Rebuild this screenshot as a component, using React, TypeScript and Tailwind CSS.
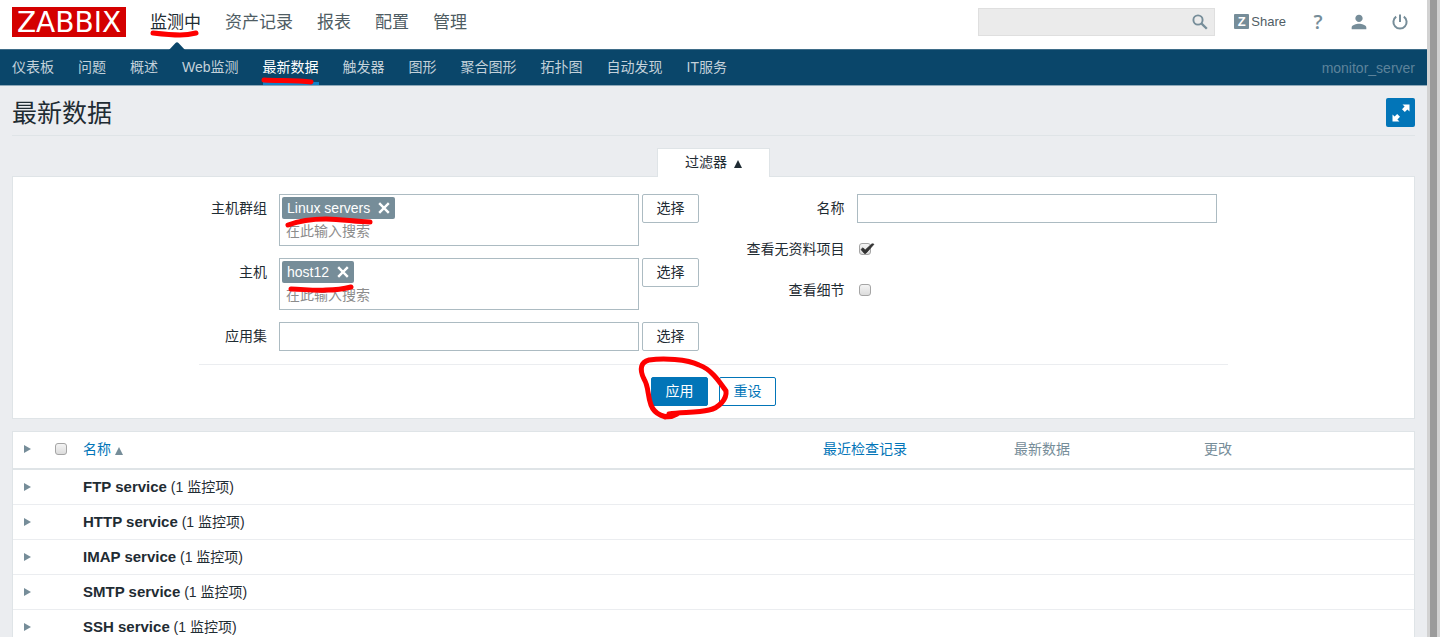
import { useState } from "react";
import type { ReactNode } from "react";
import { MdPerson } from "react-icons/md";

const mainMenu = ["监测中", "资产记录", "报表", "配置", "管理"];

const subMenu = [
  "仪表板",
  "问题",
  "概述",
  "Web监测",
  "最新数据",
  "触发器",
  "图形",
  "聚合图形",
  "拓扑图",
  "自动发现",
  "IT服务",
];

const applications = [
  { name: "FTP service", items: 1 },
  { name: "HTTP service", items: 1 },
  { name: "IMAP service", items: 1 },
  { name: "SMTP service", items: 1 },
  { name: "SSH service", items: 1 },
];

// hand-drawn red marker, laid over the element it points at
function Marker({ d, className }: { d: string; className: string }) {
  return (
    <svg className={`pointer-events-none absolute z-10 overflow-visible ${className}`} aria-hidden="true">
      <path d={d} fill="none" stroke="#fe0000" strokeWidth="5" strokeLinecap="round" strokeLinejoin="round" />
    </svg>
  );
}

function Checkbox({ id, label, defaultChecked }: { id: string; label?: string; defaultChecked?: boolean }) {
  return (
    <span className="relative block size-3">
      <input
        id={id}
        type="checkbox"
        aria-label={label}
        defaultChecked={defaultChecked}
        className="peer block size-3 appearance-none rounded-[3px] border border-[#a5a5a5] bg-linear-to-b from-[#f4f4f4] to-[#dcdcdc]"
      />
      <svg
        viewBox="0 0 16 12"
        className="pointer-events-none absolute top-0 left-0 hidden h-3 w-4 peer-checked:block"
        aria-hidden="true"
      >
        <path d="M2 6.5 4 4.8 6.2 7 13 .8 15 1.2 6.8 10.4 5.4 10.4Z" fill="#333" stroke="#333" strokeWidth=".8" />
      </svg>
    </span>
  );
}

function SelectButton() {
  return (
    <button type="button" className="h-[29px] w-[57px] shrink-0 rounded-xs border border-[#acbbc2] bg-white pb-0.5">
      选择
    </button>
  );
}

function MultiSelect({ id, tag, children }: { id: string; tag: string; children?: ReactNode }) {
  const [selected, setSelected] = useState(true);
  return (
    <div className="relative h-[52px] w-[360px] border border-[#acbbc2] bg-white p-0.5">
      {selected && (
        <span className="flex h-[22px] w-fit items-center gap-2 rounded-xs bg-[#768d99] px-[5px] text-white">
          {tag}
          <button type="button" aria-label={`移除 ${tag}`} onClick={() => setSelected(false)}>
            <svg viewBox="0 0 10 10" className="size-3" aria-hidden="true">
              <path d="M1 1 9 9M9 1 1 9" stroke="#fff" strokeWidth="2" />
            </svg>
          </button>
        </span>
      )}
      <input
        id={id}
        type="text"
        placeholder="在此输入搜索"
        className="block h-6 w-full px-1 outline-none placeholder:text-[#8c8c8c]"
      />
      {children}
    </div>
  );
}

function RowArrow({ label }: { label: string }) {
  return (
    <button type="button" aria-label={label} className="block">
      <svg viewBox="0 0 7 8" className="h-2 w-[7px]" aria-hidden="true">
        <path d="M0 0 7 4 0 8Z" fill="#768d99" />
      </svg>
    </button>
  );
}

function Header() {
  return (
    <header>
      <div className="flex h-[49px] items-center bg-white px-3 pb-1.5">
        <a
          href="#home"
          className="flex h-[30px] w-[114px] items-center justify-center bg-[#d40000] pt-0.5 font-['DejaVu_Sans',sans-serif] text-[28px] leading-[30px] text-white"
        >
          ZABBIX
        </a>
        <nav className="ml-6 flex gap-6 pt-0.5 text-[17px] leading-6">
          {mainMenu.map((item, i) => (
            <a key={item} href="#menu" className={i === 0 ? "relative text-[#1f2c33]" : "text-[#4f5d64]"}>
              {item}
              {i === 0 && (
                <>
                  <Marker d="M3 0C12 1 22 2 30 2S42 1 46 0" className="top-[22px] left-0 h-2 w-12" />
                  <svg viewBox="0 0 18 9" className="absolute top-[31px] left-[18px] h-[9px] w-[18px]" aria-hidden="true">
                    <path d="M0 9 7.5 1Q9-.5 10.5 1L18 9Z" fill="#0a466a" />
                  </svg>
                </>
              )}
            </a>
          ))}
        </nav>
        <form className="ml-auto flex h-7 w-[237px] items-center border border-[#dfdfdf] bg-[#ebebeb] pr-1.5">
          <input type="text" aria-label="搜索" className="h-full min-w-0 flex-1 px-2 outline-none" />
          <button type="button" aria-label="搜索">
            <svg viewBox="0 0 16 16" className="size-4" fill="none" stroke="#768d99" aria-hidden="true">
              <circle cx="6" cy="6" r="4.6" strokeWidth="1.9" />
              <path d="M9.6 9.6 14.8 14.8" strokeWidth="2.3" />
            </svg>
          </button>
        </form>
        <a href="#share" className="ml-[19px] flex items-center gap-0.5 text-[13px] text-[#4f5d64]">
          <span className="flex size-[15px] items-center justify-center rounded-[1px] bg-[#768d99] text-[13px] font-bold text-white">
            Z
          </span>
          Share
        </a>
        <a
          href="#help"
          className="ml-[22px] w-5 text-center font-['Open_Sans',sans-serif] text-xl leading-7 font-semibold text-[#768d99]"
        >
          ?
        </a>
        <a href="#profile" aria-label="用户" className="ml-5">
          <MdPerson className="size-[22px] text-[#768d99]" />
        </a>
        <a href="#logout" aria-label="退出" className="mr-[7px] ml-[22px]">
          <svg viewBox="0 0 16 16" className="size-4" fill="none" stroke="#768d99" strokeWidth="2" aria-hidden="true">
            <path d="M8 .5V8M4.2 2.6A6.6 6.6 0 1 0 11.8 2.6" />
          </svg>
        </a>
      </div>
      <div className="flex h-[37px] items-center border-y border-t-[#3f6d89] border-b-[#8fa9b9] bg-[#0a466a] px-3">
        <nav className="flex gap-6">
          {subMenu.map((item) => (
            <a
              key={item}
              href="#submenu"
              className={
                item === "最新数据"
                  ? "relative h-[35px] border-b-3 border-[#1183c8] leading-[35px] text-white"
                  : "leading-[35px] text-[#c3d1da]"
              }
            >
              {item}
              {item === "最新数据" && <Marker d="M1 2C14 3 34 2 48 4" className="top-7 left-0 h-2 w-12" />}
            </a>
          ))}
        </nav>
        <span className="ml-auto text-[#5d839b]">monitor_server</span>
      </div>
    </header>
  );
}

function Filter() {
  return (
    <section>
      <div className="flex justify-center">
        <button
          type="button"
          className="relative -mb-px flex h-[29px] w-[113px] items-center justify-center gap-[7px] border border-b-0 border-[#dfe4e7] bg-white pb-0.5"
        >
          过滤器
          <svg viewBox="0 0 8 8" className="mt-1 size-2" aria-hidden="true">
            <path d="M4 0 8 8H0Z" fill="#1f2c33" />
          </svg>
        </button>
      </div>
      <form className="border border-[#dfe4e7] bg-white py-3">
        <div className="mx-auto grid max-w-[1029px] grid-cols-2 border-b border-[#ebedf0] pt-[5px] pb-[13px]">
          <div className="flex flex-col gap-3">
            <div className="flex gap-[3px]">
              <label htmlFor="groups" className="mr-[9px] w-[68px] text-right leading-7">
                主机群组
              </label>
              <MultiSelect id="groups" tag="Linux servers">
                <Marker d="M8 6C16 3 30 0 46 0S76 3 90 3" className="top-6 left-0 h-2 w-20" />
              </MultiSelect>
              <SelectButton />
            </div>
            <div className="flex gap-[3px]">
              <label htmlFor="hosts" className="mr-[9px] w-[68px] text-right leading-7">
                主机
              </label>
              <MultiSelect id="hosts" tag="host12">
                <Marker d="M11 6C22 6 34 8 46 7Q60 7 71 4" className="top-6 left-0 h-2 w-20" />
              </MultiSelect>
              <SelectButton />
            </div>
            <div className="flex gap-[3px]">
              <label htmlFor="application" className="mr-[9px] w-[68px] text-right leading-7">
                应用集
              </label>
              <input id="application" type="text" className="h-[29px] w-[360px] border border-[#acbbc2] px-1 outline-none" />
              <SelectButton />
            </div>
          </div>
          <div className="flex flex-col gap-3">
            <div className="flex h-[29px] items-center gap-3">
              <label htmlFor="name" className="w-[131px] pb-0.5 text-right">
                名称
              </label>
              <input id="name" type="text" className="h-[29px] w-[360px] border border-[#acbbc2] px-1 outline-none" />
            </div>
            <div className="flex h-[29px] items-center gap-3.5 pb-0.5">
              <label htmlFor="no-data" className="w-[131px] text-right">
                查看无资料项目
              </label>
              <Checkbox id="no-data" defaultChecked />
            </div>
            <div className="flex h-[29px] items-center gap-3.5 pb-0.5">
              <label htmlFor="details" className="w-[131px] text-right">
                查看细节
              </label>
              <Checkbox id="details" />
            </div>
          </div>
        </div>
        <div className="mt-3 flex justify-center gap-[11px]">
          <span className="relative">
            <button
              type="button"
              className="h-[29px] w-[57px] rounded-xs border border-[#0275b8] bg-[#0275b8] pb-0.5 text-white"
            >
              应用
            </button>
            <Marker
              d="M26 37C14 44 3 36 0 28C-4 17-2 10-7 2C-12-8-10-15-2-17C12-19 36-18 48-12C60-8 68 4 75 14C76 22 68 31 58 33C46 36 30 35 18 37M14 40 22 38"
              className="top-0 left-0 size-12"
            />
          </span>
          <button
            type="button"
            className="h-[29px] w-[57px] rounded-xs border border-[#0275b8] bg-white pb-0.5 text-[#0275b8]"
          >
            重设
          </button>
        </div>
      </form>
    </section>
  );
}

function DataTable() {
  return (
    <div className="mt-3 border border-[#dfe4e7] bg-white">
      <table className="w-full table-fixed border-collapse text-left">
        <thead>
          <tr className="h-[37px] border-b-2 border-[#dfe4e7]">
            <th className="w-9 pb-0.5 pl-[11px]">
              <RowArrow label="全部展开" />
            </th>
            <th className="w-7 pb-0.5 pl-1.5">
              <Checkbox id="all" label="全选" />
            </th>
            <th className="pb-0.5 pl-1.5 font-normal">
              <a href="#sort-name" className="flex items-center gap-1 text-[#0275b8]">
                名称
                <svg viewBox="0 0 8 8" className="mt-1 size-2" aria-hidden="true">
                  <path d="M4 0 8 8H0Z" fill="#768d99" />
                </svg>
              </a>
            </th>
            <th className="w-[191px] pb-0.5 pl-1.5 font-normal">
              <a href="#sort-check" className="text-[#0275b8]">
                最近检查记录
              </a>
            </th>
            <th className="w-[190px] pb-0.5 pl-1.5 font-normal text-[#768d99]">最新数据</th>
            <th className="w-[216px] pb-0.5 pl-1.5 font-normal text-[#768d99]">更改</th>
          </tr>
        </thead>
        <tbody>
          {applications.map((app) => (
            <tr key={app.name} className="h-[35px] border-b border-[#ebedf0]">
              <td className="pl-[11px]">
                <RowArrow label={`展开 ${app.name}`} />
              </td>
              <td />
              <td colSpan={4} className="pl-1.5">
                <b className="text-[15px] leading-5">{app.name}</b> ({app.items} 监控项)
              </td>
            </tr>
          ))}
        </tbody>
      </table>
    </div>
  );
}

export default function App() {
  return (
    <div className="flex h-screen overflow-hidden bg-[#ebedf0] font-['Liberation_Sans','Noto_Sans_CJK_SC',sans-serif] text-sm leading-5 text-[#1f2c33]">
      <div className="min-w-0 flex-1 overflow-hidden">
        <Header />
        <main className="px-3">
          <div className="flex h-[50px] items-center justify-between border-b border-[#dfe4e7] pt-1">
            <h1 className="text-[25px] leading-8">最新数据</h1>
            <button
              type="button"
              aria-label="全屏"
              className="flex size-[29px] items-center justify-center rounded-xs bg-[#0275b8]"
            >
              <svg viewBox="0 0 18 18" className="size-[18px]" fill="#fff" aria-hidden="true">
                <path d="M10.5 .5H17.5V7.5L15.4 5.4 12.8 8 10 5.2 12.6 2.6ZM7.5 17.5H.5V10.5L2.6 12.6 5.2 10 8 12.8 5.4 15.4Z" />
              </svg>
            </button>
          </div>
          <div className="pt-3">
            <Filter />
            <DataTable />
          </div>
        </main>
      </div>
      {/* scrollbar track */}
      <div className="w-[13px] shrink-0 bg-[#d2d2d2] pr-[3px] pl-[3px]">
        <div className="h-full bg-[#9b9b9b]" />
      </div>
    </div>
  );
}
